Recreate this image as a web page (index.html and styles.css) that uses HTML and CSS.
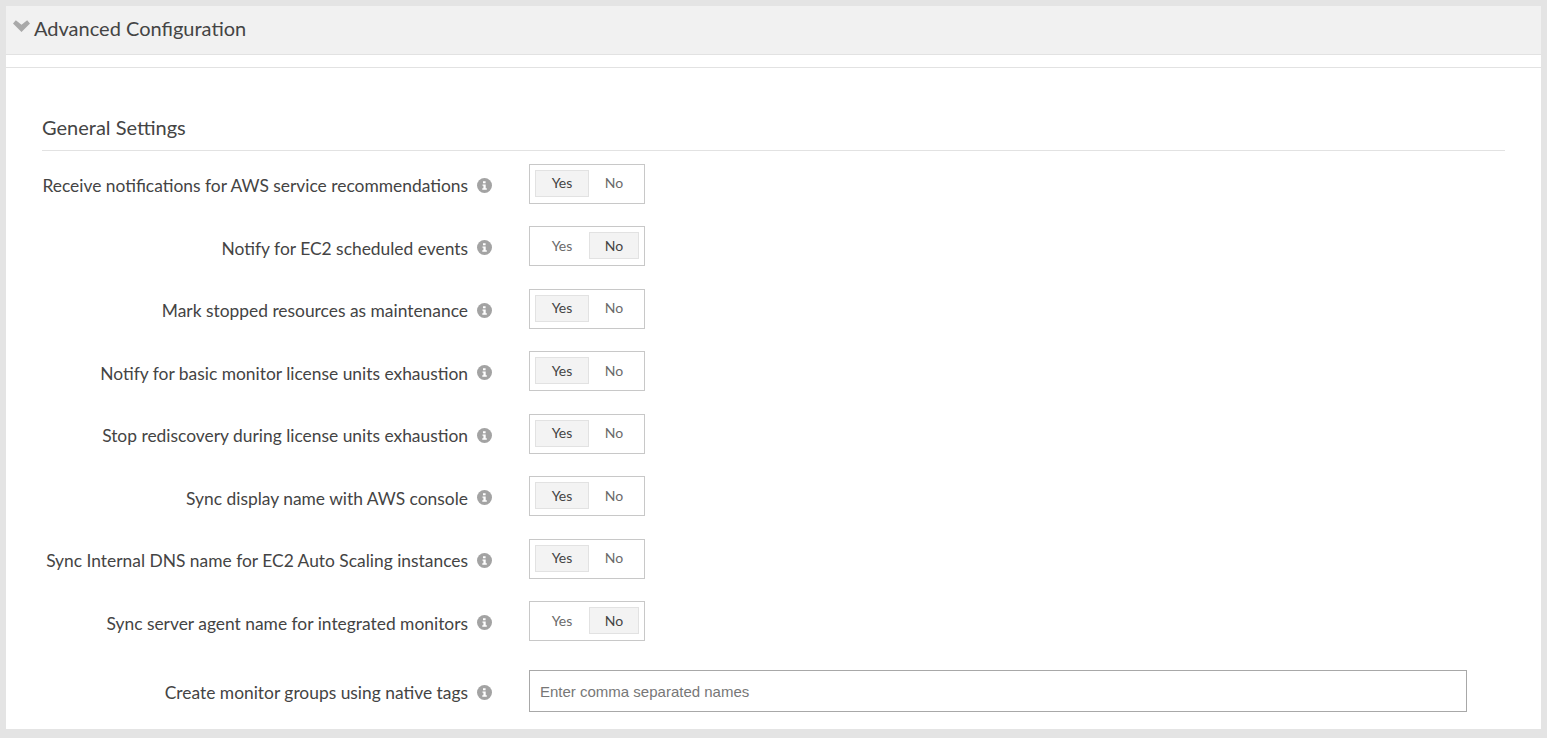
FILE: index.html
```html
<!DOCTYPE html>
<html lang="en">
<head>
<meta charset="utf-8">
<title>Advanced Configuration</title>
<link rel="stylesheet" href="styles.css">
</head>
<body>
<main class="panel">
  <header class="panel-head">
    <svg class="chevron" width="17" height="12" viewBox="0 0 18 12" preserveAspectRatio="none" aria-hidden="true"><path d="M0 3.6 3 0.2 9 4.8 15 0.2 18 3.6 9 12Z" fill="#a9a9a9"/></svg>
    <h1 class="panel-title">Advanced Configuration</h1>
  </header>
  <div class="strip"></div>
  <section class="body">
    <h2 class="section-title">General Settings</h2>
    <div class="rows">
      <div class="row"><span class="label">Receive notifications for AWS service recommendations</span><svg class="info" viewBox="0 0 15 15"><use href="#i"/></svg><div class="switch"><span class="opt yes on">Yes</span><span class="opt no">No</span></div></div>
      <div class="row"><span class="label">Notify for EC2 scheduled events</span><svg class="info" viewBox="0 0 15 15"><use href="#i"/></svg><div class="switch"><span class="opt yes">Yes</span><span class="opt no on">No</span></div></div>
      <div class="row"><span class="label">Mark stopped resources as maintenance</span><svg class="info" viewBox="0 0 15 15"><use href="#i"/></svg><div class="switch"><span class="opt yes on">Yes</span><span class="opt no">No</span></div></div>
      <div class="row"><span class="label">Notify for basic monitor license units exhaustion</span><svg class="info" viewBox="0 0 15 15"><use href="#i"/></svg><div class="switch"><span class="opt yes on">Yes</span><span class="opt no">No</span></div></div>
      <div class="row"><span class="label">Stop rediscovery during license units exhaustion</span><svg class="info" viewBox="0 0 15 15"><use href="#i"/></svg><div class="switch"><span class="opt yes on">Yes</span><span class="opt no">No</span></div></div>
      <div class="row"><span class="label">Sync display name with AWS console</span><svg class="info" viewBox="0 0 15 15"><use href="#i"/></svg><div class="switch"><span class="opt yes on">Yes</span><span class="opt no">No</span></div></div>
      <div class="row"><span class="label">Sync Internal DNS name for EC2 Auto Scaling instances</span><svg class="info" viewBox="0 0 15 15"><use href="#i"/></svg><div class="switch"><span class="opt yes on">Yes</span><span class="opt no">No</span></div></div>
      <div class="row"><span class="label">Sync server agent name for integrated monitors</span><svg class="info" viewBox="0 0 15 15"><use href="#i"/></svg><div class="switch"><span class="opt yes">Yes</span><span class="opt no on">No</span></div></div>
      <div class="row row-input"><span class="label">Create monitor groups using native tags</span><svg class="info" viewBox="0 0 15 15"><use href="#i"/></svg><input class="names" type="text" placeholder="Enter comma separated names"></div>
    </div>
  </section>
</main>
<svg class="defs" width="0" height="0" aria-hidden="true"><defs><g id="i"><circle cx="7.5" cy="7.5" r="7.5" fill="#a3a3a3"/><path d="M6 3.3h2.6v2H6zM5.5 6.4h3.2v3.9h1.1v1.4H5.3v-1.4h1.1V7.8H5.5z" fill="#fff"/></g></defs></svg>
</body>
</html>
```
FILE: styles.css
```css
* { box-sizing: border-box; }
html, body { height: 100%; }
body {
  margin: 0;
  padding: 6px 6px 9px;
  background: #e4e4e4;
  font-family: Lato, "Open Sans", sans-serif;
  color: #444;
  overflow: hidden;
}
.panel { background: #fff; height: 723px; overflow: hidden; }
.panel-head {
  height: 49px;
  background: #f1f1f1;
  border-bottom: 1px solid #e2e2e2;
  display: flex;
  align-items: center;
  padding: 0 0 4px 7px;
  gap: 4px;
}
.chevron { margin-top: -4px; }
.panel-title { margin: 0; font-size: 20px; font-weight: 400; color: #444; }
.strip { height: 13px; border-bottom: 1px solid #e2e2e2; margin-right: -1px; }
.body { padding: 0 36px; }
.section-title {
  margin: 0;
  padding-top: 47px;
  height: 83px;
  font-size: 20px;
  line-height: 24px;
  font-weight: 400;
  color: #444;
  border-bottom: 1px solid #e2e2e2;
}
.rows { padding-top: 12.75px; display: flex; flex-direction: column; gap: 22.5px; }
.row { display: flex; align-items: center; height: 40px; }
.label { width: 426px; text-align: right; font-size: 17.4px; color: #444; white-space: nowrap; padding-top: 4px; }
.info { width: 15px; height: 15px; margin-left: 9px; margin-right: 37px; flex: none; margin-top: 3px; }
.switch {
  width: 116px;
  height: 40px;
  border: 1px solid #c8c8c8;
  padding: 5px 5px 6px;
  display: flex;
}
.opt {
  display: flex;
  align-items: center;
  justify-content: center;
  height: 27px;
  font-size: 14px;
  color: #6a6a6a;
  border: 1px solid transparent;
  padding-bottom: 1px;
}
.yes { width: 54px; }
.no { width: 50px; }
.opt.on { background: #f3f3f3; border-color: #e2e2e2; color: #444; }
.row-input { height: 42px; margin-top: 6.25px; }
.row-input .label { padding-top: 2px; }
.names {
  width: 938px;
  height: 42px;
  border: 1px solid #a8a8a8;
  border-radius: 0;
  padding: 0 10px;
  font-family: "Liberation Sans", Arial, sans-serif;
  font-size: 15px;
  outline: none;
}
.names::placeholder { color: #777; opacity: 1; }
.defs { position: absolute; }
```
